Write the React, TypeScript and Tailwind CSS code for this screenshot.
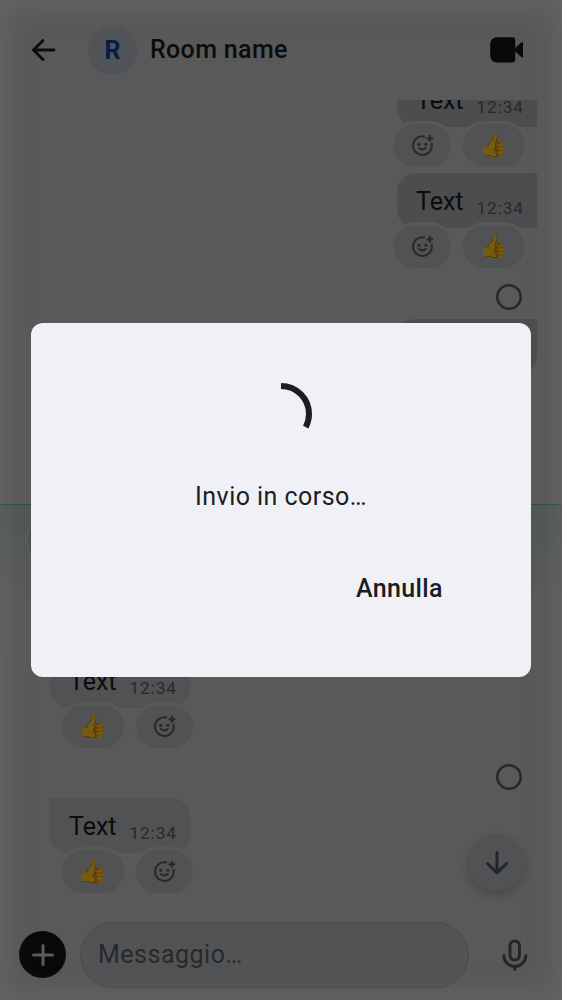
import React from "react";

function AddReactionIcon() {
  return (
    <svg width="24" height="24" viewBox="0 0 24 24" fill="none" stroke="#27292b" strokeWidth="2">
      <path d="M14.1 2.600A9.400 9.400 0 1 0 20.400 8.900" />
      <path d="M18.900 1.800v5M16.400 4.300h5" strokeWidth="2.300" strokeLinecap="round" />
      <path d="M8 14.100Q11.400 16.900 14.800 14.100" strokeLinecap="round" />
      <circle cx="7.800" cy="10.300" r="1.600" fill="#27292b" stroke="none" />
      <circle cx="14.900" cy="10.300" r="1.600" fill="#27292b" stroke="none" />
    </svg>
  );
}

function AddReaction() {
  return (
    <div className="flex h-[49px] w-[63px] items-center justify-center rounded-full border-[3px] border-[#595959] bg-[#515254]">
      <AddReactionIcon />
    </div>
  );
}

function ThumbReaction() {
  return (
    <div className="flex h-[49px] w-[68px] items-center justify-center rounded-full border-[3px] border-[#595959] bg-[#515254]">
      <span className="font-['Noto_Color_Emoji',sans-serif] text-[23px] leading-[28px] brightness-[0.45]">👍</span>
    </div>
  );
}

function Bubble({ shape }: { shape: string }) {
  return (
    <div className={`flex h-[55px] w-[140px] items-start pl-[19px] ${shape}`}>
      <span className="mt-[13.500px] text-[25px] leading-[30px] text-[#0b0c0d]">Text</span>
      <span className="ml-[13px] mt-[23px] text-[17.2px] leading-[24px] tracking-[0.9px] text-[#27292b]">12:34</span>
    </div>
  );
}

function SendingMark() {
  return (
    <svg width="26" height="26" viewBox="0 0 26 26" fill="none" stroke="#27292b" strokeWidth="2.500">
      <circle cx="13" cy="13" r="11.750" />
    </svg>
  );
}

function OwnMessage() {
  return (
    <div className="h-[101px]">
      <div className="flex justify-end pr-[25px]">
        <Bubble shape="rounded-l-[19px] bg-[#4c4d4f]" />
      </div>
      <div className="relative -mt-[6px] flex justify-end gap-[6px] pr-[34px]">
        <AddReaction />
        <ThumbReaction />
      </div>
    </div>
  );
}

function OtherMessage() {
  return (
    <div className="h-[145px]">
      <div className="flex pl-[50px]">
        <Bubble shape="rounded-r-[19px] rounded-bl-[19px] bg-[#515254]" />
      </div>
      <div className="relative -mt-[6px] flex gap-[6px] pl-[59px]">
        <ThumbReaction />
        <AddReaction />
      </div>
    </div>
  );
}

export default function App() {
  return (
    <div className="relative flex h-[1000px] w-[562px] flex-col overflow-hidden bg-[#595959] font-['Roboto',sans-serif]">
      <header className="flex h-[100px] shrink-0 items-center">
        <svg className="ml-[30px]" width="28" height="28" viewBox="0 0 28 28" fill="none" stroke="#0b0c0d" strokeWidth="2.8" strokeLinecap="round" strokeLinejoin="round">
          <path d="M24 14H4M13 4.5L3.5 14L13 23.5" />
        </svg>
        <div className="ml-[30px] flex size-[49px] items-center justify-center rounded-full bg-[#505358] pt-[2px] text-[25px] font-bold text-[#051d45]">R</div>
        <h1 className="ml-[13px] text-[25px] font-medium leading-[30px] tracking-[0.35px] text-[#0b0c0d]">Room name</h1>
        <svg className="ml-auto mr-[38px]" width="34" height="28" viewBox="0 0 34 28" fill="#08090b">
          <path d="M6.500 1.300H22.500a2.700 2.700 0 0 1 2.700 2.700V12L31.200 6.600Q33 5.400 33 7.200V20.400Q33 22.200 31.200 21L25.200 15.600V23.700a2.700 2.700 0 0 1-2.700 2.700H6.500A6.300 6.300 0 0 1 .2 20.100V7.600A6.300 6.300 0 0 1 6.500 1.300Z" />
        </svg>
      </header>

      <main className="h-[808px] shrink-0 overflow-hidden">
        <div className="-mt-[28px]">
          <OwnMessage />
          <OwnMessage />
          <div className="flex h-[45px] justify-end pr-[40px] pt-[10px]">
            <SendingMark />
          </div>
          <div className="flex h-[185px] justify-end pr-[25px]">
            <Bubble shape="rounded-l-[19px] rounded-br-[19px] bg-[#4c4d4f]" />
          </div>
          <div className="h-[149px] border-t border-[#2c4f43] bg-linear-to-b from-[#4f5753] to-[#595959] to-[95px] pl-[25px] pt-[9px]">
            <div className="size-[54px] rounded-full border-[3px] border-[#595959] bg-[#4c5159]" />
          </div>
          <OtherMessage />
          <OtherMessage />
        </div>
      </main>

      <footer className="flex h-[92px] shrink-0 items-center pt-[1px]">
        <div className="ml-[19px] flex size-[47px] items-center justify-center rounded-full bg-[#08090b]">
          <svg width="24" height="24" viewBox="0 0 24 24" stroke="#5b5b5b" strokeWidth="3" strokeLinecap="round">
            <path d="M12 2.500v19M2.500 12h19" />
          </svg>
        </div>
        <div className="ml-[13.500px] flex h-[66px] w-[389px] items-center rounded-full border border-[#484b4e] bg-[#525355] pl-[17.500px] pt-[1px] text-[25px] tracking-[0.5px] text-[#27292b]">
          Messaggio…
        </div>
        <svg className="ml-[32px]" width="28" height="34" viewBox="0 0 28 34" fill="none" stroke="#23262a" strokeWidth="3" strokeLinecap="round">
          <rect x="9" y="3" width="9.500" height="19" rx="4.750" />
          <path d="M2.800 17.500a11 11 0 0 0 22 0M13.800 28.500v3" />
        </svg>
      </footer>

      <div className="absolute left-[496px] top-[764px]">
        <SendingMark />
      </div>
      <button className="absolute left-[468px] top-[834px] flex size-[57px] items-center justify-center rounded-full bg-[#515254] shadow-[0_4px_8px_rgba(0,0,0,0.2)]">
        <svg width="28" height="28" viewBox="0 0 28 28" fill="none" stroke="#23262a" strokeWidth="3" strokeLinecap="round" strokeLinejoin="round">
          <path d="M14 3.500v20M4.500 14.500l9.500 9.500l9.500-9.500" />
        </svg>
      </button>

      <div className="pointer-events-none absolute inset-0 shadow-[inset_0_0_32px_rgba(130,130,130,0.36)]" />

      <section role="dialog" className="absolute left-[31px] top-[323px] flex h-[354px] w-[500px] flex-col items-center rounded-[12px] bg-[#f0f1f6] text-[#1b1d22]">
        <svg className="mt-[59px]" width="64" height="64" viewBox="0 0 64 64" fill="none" stroke="#1b1d22" strokeWidth="6">
          <circle cx="32" cy="32" r="28" pathLength="360" strokeDasharray="118 360" transform="rotate(-90 32 32)" />
        </svg>
        <p className="mt-[36px] text-[25px] leading-[30px] tracking-[0.45px]">Invio in corso…</p>
        <button className="mr-[88px] mt-[62px] self-end text-[25px] font-medium leading-[30px] tracking-[0.4px]">Annulla</button>
      </section>
    </div>
  );
}
